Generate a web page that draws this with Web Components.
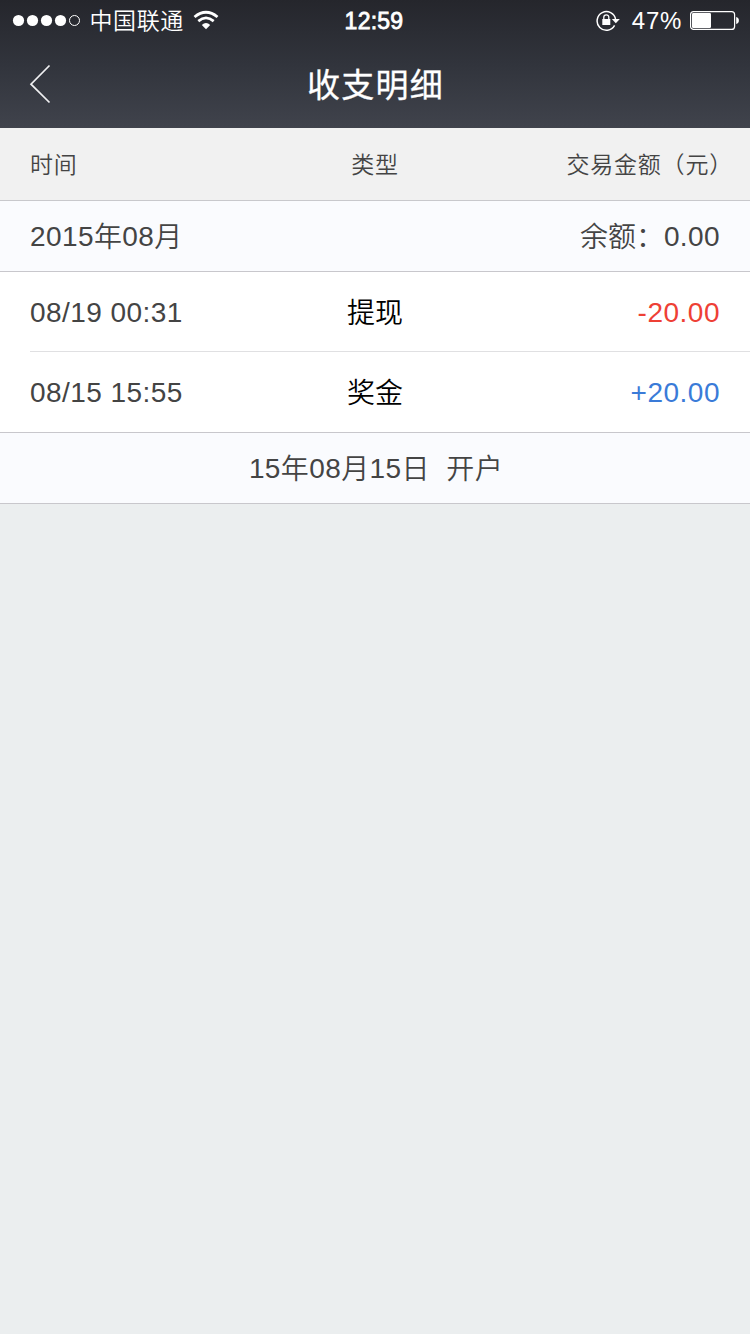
<!DOCTYPE html>
<html lang="zh-CN">
<head>
<meta charset="utf-8">
<title>收支明细</title>
<style>
html, body { margin: 0; padding: 0; }
body { width: 750px; height: 1334px; overflow: hidden; background: #ebeeef; font-family: "Liberation Sans", "Noto Sans CJK SC", sans-serif; }
</style>
</head>
<body>
<statement-page></statement-page>
<script>
class ShadowBase extends HTMLElement {
  connectedCallback() {
    if (!this.shadowRoot) this.attachShadow({ mode: 'open' }).innerHTML = this.constructor.markup;
  }
}

class StatusBar extends ShadowBase {
  static markup = `
<style>
:host { display: grid; grid-template: 40px / 1fr auto 1fr; height: 40px; color: #fff; font-size: 24px; line-height: 42px; }
.left, .right { display: flex; align-items: center; height: 40px; }
.left { padding-left: 12px; }
.right { justify-content: flex-end; padding-right: 10px; }
svg { display: block; flex: none; }
.carrier { margin-left: 8.5px; font-size: 23px; line-height: 38px; height: 40px; font-weight: 350; letter-spacing: .6px; font-family: "Noto Sans CJK SC", sans-serif; }
.wifi { margin-left: 9.5px; }
.time { font-family: "Liberation Sans", sans-serif; font-size: 23px; font-weight: 400; -webkit-text-stroke: .8px #fff; letter-spacing: .25px; padding-right: 2px; }
.pct { margin: 1px 8px 0 11.5px; font-size: 24px; letter-spacing: .7px; }
</style>
<div class="left">
  <svg width="69" height="40" viewBox="0 0 69 40" fill="#fff"><circle cx="6.5" cy="20.5" r="5.6"/><circle cx="20.5" cy="20.5" r="5.6"/><circle cx="34.5" cy="20.5" r="5.6"/><circle cx="48.5" cy="20.5" r="5.6"/><circle cx="62.5" cy="20.5" r="5" fill="none" stroke="#fff" stroke-width="1"/></svg>
  <span class="carrier">中国联通</span>
  <svg class="wifi" width="26" height="40" viewBox="0 0 26 40" fill="none" stroke="#fff"><path d="M1.5 17Q13 7.6 24.5 17" stroke-width="2.9"/><path d="M5.3 21.1Q13 14.7 20.7 21.1" stroke-width="2.7"/><path d="M8.8 25Q13 20.8 17.2 25L13 29.2Z" fill="#fff" stroke="none"/></svg>
</div>
<span class="time">12:59</span>
<div class="right">
  <svg width="24" height="40" viewBox="0 0 24 40"><path d="M18.6 25.4A9.3 9.3 0 1 1 19.6 19.5" fill="none" stroke="#fff" stroke-width="1.5"/><path d="M15.8 19H23.8L19.8 23.2Z" fill="#fff"/><path d="M6.3 19H14.3V25H6.3Z" fill="#fff"/><path d="M7.8 19.5V17.3A2.5 2.5 0 0 1 12.8 17.3V19.5" fill="none" stroke="#fff" stroke-width="1.3"/></svg>
  <span class="pct">47%</span>
  <svg width="50" height="40" viewBox="0 0 50 40"><rect x=".6" y="11.6" width="44" height="17.8" rx="3" fill="none" stroke="#fff" stroke-width="1.2"/><rect x="2" y="13" width="19" height="15" rx="1.2" fill="#fff"/><path d="M46.2 17C49.8 17.6 49.8 23.4 46.2 24Z" fill="#fff"/></svg>
</div>`;
}

class NavBar extends ShadowBase {
  static markup = `
<style>
:host { display: grid; grid-template-columns: 80px 1fr 80px; height: 88px; color: #fff; }
svg { display: block; }
h1 { margin: 0; text-align: center; font-size: 33px; line-height: 86px; font-weight: 400; -webkit-text-stroke: .3px #fff; letter-spacing: 1.3px; padding-left: 1px; font-family: "Noto Sans CJK SC", sans-serif; }
</style>
<svg width="80" height="88" viewBox="0 0 80 88"><path d="M49.5 25.5L31 44.2L49.5 62.5" fill="none" stroke="#f0f0f2" stroke-width="1.7"/></svg>
<h1><slot></slot></h1>`;
}

class TableHead extends ShadowBase {
  static markup = `
<style>
:host { display: grid; grid-template-columns: 1fr auto 1fr; height: 73px; box-sizing: border-box; padding: 0 30px; background: #f1f1f1; border-bottom: 1px solid #c8c8cc; color: #444; font: 350 23px/71px "Noto Sans CJK SC", sans-serif; letter-spacing: .8px; white-space: nowrap; }
.end { text-align: right; margin-right: -13px; }
</style>
<slot name="time"></slot><slot name="type"></slot><span class="end"><slot name="amount"></slot></span>`;
}

class MonthBar extends ShadowBase {
  static markup = `
<style>
:host { display: flex; justify-content: space-between; height: 71px; box-sizing: border-box; padding: 0 30px; background: #fafbfe; border-bottom: 1px solid #c8c7cc; color: #444; font-size: 28px; line-height: 71px; font-weight: 350; letter-spacing: .4px; white-space: pre; }
:host([center]) { justify-content: center; padding-left: 31px; padding-right: 29px; }
</style>
<slot></slot>`;
}

class RecordRow extends ShadowBase {
  static markup = `
<style>
:host { display: block; background: #fff; padding-left: 30px; }
.row { display: grid; grid-template-columns: 1fr auto 1fr; height: 80px; box-sizing: border-box; padding-right: 30px; border-bottom: 1px solid #e0e0e2; font-size: 28px; line-height: 82px; letter-spacing: .45px; color: #444; }
:host([last]) { border-bottom: 1px solid #c8c7cc; }
:host([last]) .row { border-bottom: 0; }
.type { color: #000; font-weight: 350; letter-spacing: 0; line-height: 84px; }
.amount { text-align: right; color: #ee4035; letter-spacing: .5px; }
:host([income]) .amount { color: #3a7bd8; }
</style>
<div class="row"><slot name="time"></slot><span class="type"><slot name="type"></slot></span><span class="amount"><slot name="amount"></slot></span></div>`;
}

class StatementPage extends ShadowBase {
  static markup = `
<style>
:host { display: block; height: 1334px; background: #ebeeef; }
header { height: 128px; background: linear-gradient(#25262c, #31343c 50%, #40434c); }
b { font-weight: inherit; line-height: 1; vertical-align: -1px; }
.balance b { letter-spacing: 0; }
</style>
<header>
  <status-bar></status-bar>
  <nav-bar>收支明细</nav-bar>
</header>
<table-head><span slot="time">时间</span><span slot="type">类型</span><span slot="amount">交易金额（元）</span></table-head>
<month-bar><span>2015<b>年</b>08<b>月</b></span><span class="balance"><b>余额：</b>0.00</span></month-bar>
<record-row><span slot="time">08/19 00:31</span><span slot="type">提现</span><span slot="amount">-20.00</span></record-row>
<record-row income last><span slot="time">08/15 15:55</span><span slot="type">奖金</span><span slot="amount">+20.00</span></record-row>
<month-bar center><span>15<b>年</b>08<b>月</b>15<b>日  开户</b></span></month-bar>`;
}

customElements.define('status-bar', StatusBar);
customElements.define('nav-bar', NavBar);
customElements.define('table-head', TableHead);
customElements.define('month-bar', MonthBar);
customElements.define('record-row', RecordRow);
customElements.define('statement-page', StatementPage);
</script>
</body>
</html>
